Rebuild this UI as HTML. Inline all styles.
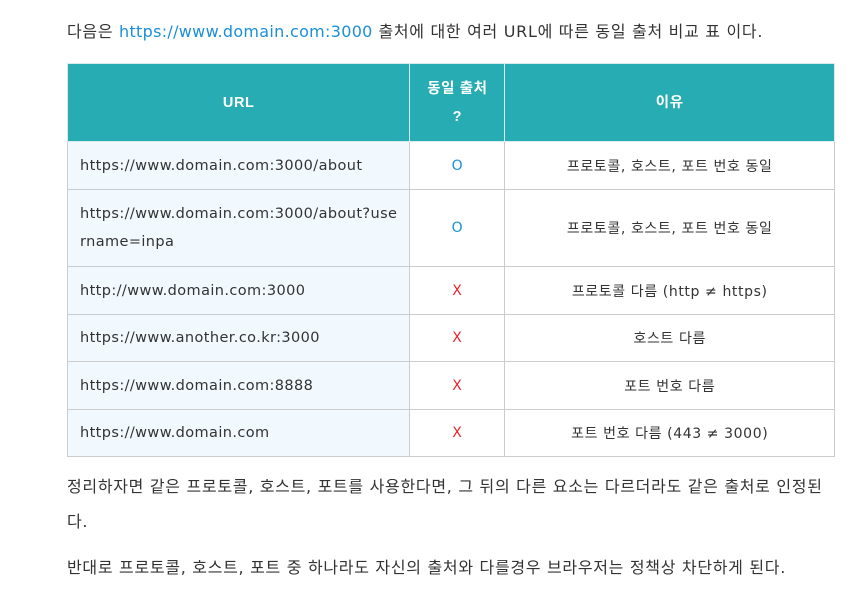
<!DOCTYPE html>
<html><head><meta charset="utf-8"><style>
body{margin:0;background:#fff;font-family:"DejaVu Sans","Noto Sans CJK KR",sans-serif;color:#333;width:865px;height:599px;overflow:hidden;position:relative}
p{position:absolute;left:67px;margin:0;font-size:16px;line-height:36px;color:#333;white-space:nowrap;letter-spacing:0.7px}
a{color:#1a8fd8;text-decoration:none;letter-spacing:0.3px}
table{position:absolute;left:67px;top:63px;border-collapse:collapse;width:768px;font-size:14px}
td,th{border:1px solid #ccc;text-align:center;padding:0 12px;letter-spacing:0.6px}
th{background:#27acb3;color:#fff;font-weight:bold;border-color:#d8eced;line-height:28px;font-family:"Liberation Sans","Noto Sans CJK KR",sans-serif;font-size:14.5px}
td:first-child{text-align:left;background:#f1f8fe;line-height:28px;letter-spacing:0.4px;font-size:14.5px;white-space:nowrap}
td{color:#333}
.o{color:#1a8fd8}.x{color:#e8262e}
</style></head><body>
<p style="top:14px">다음은 <a>https://www.domain.com:3000</a> 출처에 대한 여러 URL에 따른 동일 출처 비교 표 이다.</p>
<table>
<tr style="height:78px"><th style="width:317px">URL</th><th style="width:70px">동일 출처<br>?</th><th>이유</th></tr>
<tr style="height:48px"><td>https://www.domain.com:3000/about</td><td class="o">O</td><td>프로토콜, 호스트, 포트 번호 동일</td></tr>
<tr style="height:77px"><td>https://www.domain.com:3000/about?use<br>rname=inpa</td><td class="o">O</td><td>프로토콜, 호스트, 포트 번호 동일</td></tr>
<tr style="height:48px"><td>http://www.domain.com:3000</td><td class="x">X</td><td>프로토콜 다름 (http ≠ https)</td></tr>
<tr style="height:47px"><td>https://www.another.co.kr:3000</td><td class="x">X</td><td>호스트 다름</td></tr>
<tr style="height:48px"><td>https://www.domain.com:8888</td><td class="x">X</td><td>포트 번호 다름</td></tr>
<tr style="height:47px"><td>https://www.domain.com</td><td class="x">X</td><td>포트 번호 다름 (443 ≠ 3000)</td></tr>
</table>
<p style="top:469px">정리하자면 같은 프로토콜, 호스트, 포트를 사용한다면, 그 뒤의 다른 요소는 다르더라도 같은 출처로 인정된</p>
<p style="top:504px">다.</p>
<p style="top:550px">반대로 프로토콜, 호스트, 포트 중 하나라도 자신의 출처와 다를경우 브라우저는 정책상 차단하게 된다.</p>
</body></html>
